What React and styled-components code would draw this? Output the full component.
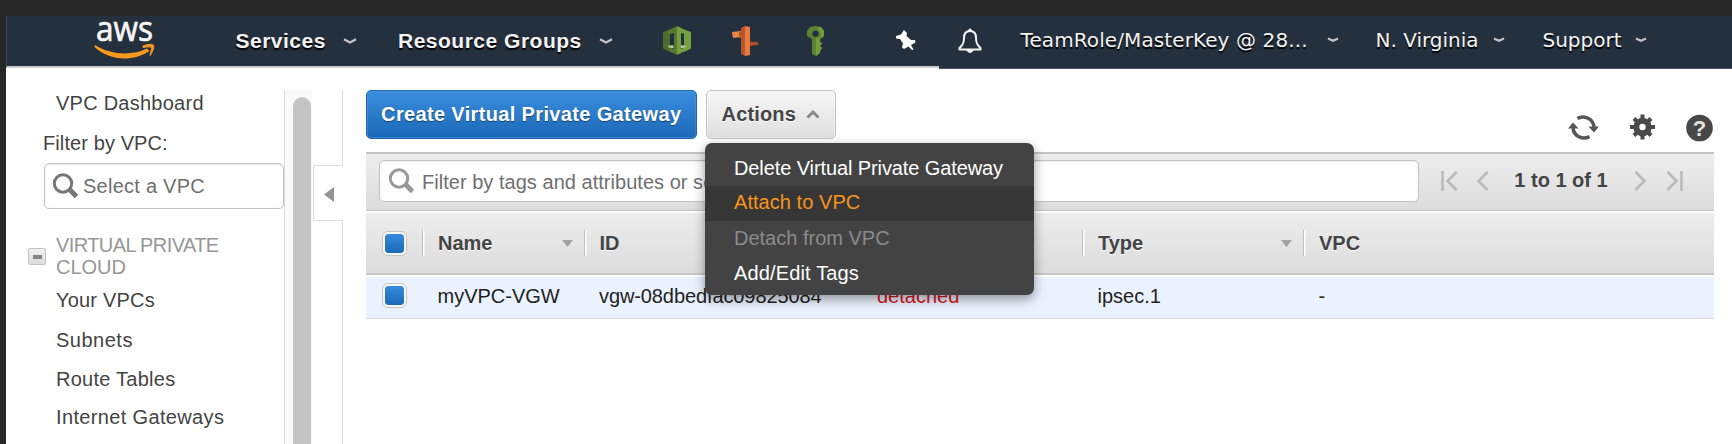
import React from 'react';
import styled, { createGlobalStyle } from 'styled-components';

const GlobalStyle = createGlobalStyle`
  *, *::before, *::after { box-sizing: border-box; }
  html, body { margin: 0; background: #272727; overflow: hidden; }
  body { font-family: "Liberation Sans", Arial, sans-serif; font-size: 20px; color: #444; }
  svg { display: block; flex: none; overflow: visible; }
`;

const Page = styled.div`
  height: 444px;
  padding: 16px 0 0 6px;
  background: #272727;
`;

const Window = styled.div`
  height: 428px;
  display: flex;
  flex-direction: column;
  background: #fff;
`;

/* ---------- top navigation ---------- */

const NavBar = styled.header`
  display: flex;
  height: 53px;
  flex: none;
  color: #f2f2f2;
  text-shadow: 0 2px 1px #000;
`;

const NavMain = styled.div`
  display: flex;
  align-items: center;
  width: 933px;
  height: 52px;
  padding-bottom: 1px;
  background: #24303d;
  border-left: 1px solid #414c5a;
  border-bottom: 2px solid #c9cbce;
`;

const NavAccount = styled.div`
  display: flex;
  align-items: center;
  flex: 1;
  padding-bottom: 4px;
  background: #24303d;
  border-bottom: 1px solid #4b5563;
  font-family: "DejaVu Sans", Verdana, sans-serif;
`;

const NavLabel = styled.span`
  flex: none;
  width: ${(p) => p.$width}px;
  margin-left: ${(p) => p.$gap}px;
  font-size: ${(p) => (p.$bold ? 21 : 20)}px;
  font-weight: ${(p) => (p.$bold ? 700 : 400)};
  letter-spacing: ${(p) => p.$track || 0}px;
  line-height: 28px;
  white-space: nowrap;
`;

const NavIcon = styled.span`
  flex: none;
  margin-left: ${(p) => p.$gap}px;
`;

/* ---------- body ---------- */

const Body = styled.div`
  display: flex;
  flex: 1;
  min-height: 0;
  padding-top: 21px;
`;

const Sidebar = styled.nav`
  width: 278px;
  flex: none;
  margin-top: -6px;
  padding-left: 38px;
`;

const SideItem = styled.div`
  height: ${(p) => p.$height || 39}px;
  line-height: ${(p) => p.$height || 39}px;
  padding-left: 12px;
  letter-spacing: ${(p) => p.$track || 0}px;
  white-space: nowrap;
`;

const SideLabel = styled(SideItem)`
  padding-left: 0;
  margin-left: -1px;
`;

const SearchBox = styled.div`
  display: flex;
  align-items: center;
  gap: ${(p) => p.$gap}px;
  width: ${(p) => p.$width}px;
  height: ${(p) => p.$height}px;
  padding-left: ${(p) => p.$inset}px;
  background: #fff;
  border: 1.5px solid #c2c2c2;
  border-radius: 5px;
  color: #6f6f6f;
  letter-spacing: ${(p) => p.$track}px;
  box-shadow: inset 0 1px 2px rgba(0, 0, 0, 0.08);
  white-space: nowrap;
`;

const BoxText = styled.span`
  padding-top: ${(p) => p.$drop || 0}px;
`;

const SideGroup = styled.div`
  display: flex;
  align-items: center;
  margin: 26px 0 3px -16px;
  color: #979797;
  line-height: 21.5px;
`;

const GroupName = styled.div`
  margin-left: 10px;
  white-space: nowrap;
`;

const GroupLine = styled.div`
  letter-spacing: ${(p) => p.$track}px;
`;

const Collapse = styled.span`
  display: flex;
  align-items: center;
  justify-content: center;
  width: 18px;
  height: 17px;
  background: linear-gradient(#f2f2f2, #dcdcdc);
  border: 1.5px solid #c3c3c3;
  border-radius: 2px;

  &::after {
    content: "";
    width: 9px;
    height: 4px;
    background: #858585;
  }
`;

const ScrollTrack = styled.div`
  width: 28px;
  flex: none;
  padding: 7px 2px 0 8px;
  background: #fafafa;
  border-left: 1px solid #dcdcdc;
`;

const ScrollThumb = styled.div`
  width: 18px;
  height: 100%;
  background: #c4c4c4;
  border-radius: 9px 9px 0 0;
`;

const Splitter = styled.div`
  display: flex;
  flex-direction: column;
  align-items: flex-end;
  width: 31px;
  flex: none;
`;

const SplitLine = styled.div`
  width: 1px;
  height: ${(p) => p.$height};
  flex: ${(p) => (p.$height ? 'none' : 1)};
  background: #dedede;
`;

const SplitHandle = styled.div`
  display: flex;
  align-items: center;
  justify-content: flex-end;
  width: 30px;
  height: 56px;
  padding: 2px 9px 0 0;
  border: 1px solid #dedede;
  border-right: 0;
  border-radius: 2px 0 0 2px;
`;

const Main = styled.main`
  width: 1348px;
  margin-left: 23px;
  flex: none;
`;

const Toolbar = styled.div`
  display: flex;
  height: 49px;
  margin-bottom: 13px;
`;

const Button = styled.button`
  display: flex;
  align-items: center;
  justify-content: center;
  gap: 10px;
  width: ${(p) => p.$width}px;
  height: 49px;
  padding: 0;
  font: 700 20px "Liberation Sans", Arial, sans-serif;
  letter-spacing: ${(p) => p.$track}px;
  white-space: nowrap;
  border-radius: 5px;
  color: ${(p) => (p.$primary ? '#fff' : '#444')};
  border: 1.5px solid ${(p) => (p.$primary ? '#1b67b3' : '#c1c1c1')};
  background: ${(p) => (p.$primary ? 'linear-gradient(#3a8ddd, #1c69b9)' : 'linear-gradient(#f6f6f6, #dfdfdf)')};
  box-shadow: inset 0 0 0 1px ${(p) => (p.$primary ? 'rgba(90,160,225,.4)' : 'rgba(255,255,255,.4)')};
  text-shadow: ${(p) => (p.$primary ? '0 1px 1px rgba(0,0,0,.45)' : '0 1px 0 #fff')};
`;

const MenuAnchor = styled.div`
  position: relative;
  margin-left: 9.5px;
`;

const Menu = styled.div`
  position: absolute;
  z-index: 2;
  top: 53px;
  left: -1px;
  width: 329px;
  height: 152px;
  padding-top: 8px;
  background: #434343;
  border-radius: 7px;
  box-shadow: 0 4px 12px rgba(0, 0, 0, 0.4);
`;

const tones = { normal: '#fff', active: '#f7941d', disabled: '#8b8b8b' };

const MenuItem = styled.div`
  height: 35px;
  line-height: ${(p) => (p.$tone === 'active' ? 33.5 : 35)}px;
  padding-left: 29px;
  letter-spacing: ${(p) => p.$track}px;
  white-space: nowrap;
  color: ${(p) => tones[p.$tone]};
  background: ${(p) => (p.$tone === 'active' ? '#363636' : 'transparent')};
`;

const Tools = styled.div`
  display: flex;
  align-items: flex-start;
  margin-left: auto;
  padding-top: 24px;
`;

const Tool = styled.span`
  margin-right: ${(p) => p.$gap}px;
`;

const FilterBar = styled.div`
  display: flex;
  align-items: center;
  height: 59px;
  padding: 0 0 2px 13px;
  background: linear-gradient(#ededed, #dcdcdc);
  border-top: 2px solid #c3c3c3;
  border-bottom: 1.5px solid #c3c3c3;
`;

const Pager = styled.div`
  display: flex;
  align-items: center;
  margin-left: 21.5px;
`;

const PageRange = styled.span`
  width: 95px;
  margin: 0 25px 0 25px;
  padding-bottom: 2px;
  font-weight: 700;
  text-align: center;
  white-space: nowrap;
`;

const Gap = styled.span`
  width: ${(p) => p.$width}px;
`;

const columns = '56px 161.5px 278px 220.5px 221px 1fr';

const HeaderRow = styled.div`
  display: grid;
  grid-template-columns: ${columns};
  align-items: center;
  height: 62px;
  margin-top: 2px;
  background: linear-gradient(#ededed, #dcdcdc);
  border-bottom: 2px solid #c6c6c6;
  font-weight: 700;
  text-shadow: 0 1px 0 #fff;
`;

const HeaderCell = styled.div`
  display: flex;
  align-items: center;
  justify-content: space-between;
  height: 26px;
  padding: 1px 11px 0 ${(p) => p.$inset || 15}px;
  border-left: 1.5px solid #bfbfbf;
  box-shadow: inset 1.5px 0 0 #fff;
`;

const DataRow = styled.div`
  display: grid;
  grid-template-columns: ${columns};
  align-items: center;
  height: 42px;
  margin-top: 1.5px;
  padding-bottom: 4px;
  background: #eaf2fe;
  border-bottom: 1.5px solid #d9dcdf;
  color: #222;
`;

const DataCell = styled.div`
  padding: 3px 0 0 ${(p) => p.$inset || 15.5}px;
  letter-spacing: ${(p) => p.$track || 0}px;
  color: ${(p) => (p.$alert ? '#d8151f' : '#222')};
`;

const CheckBox = styled.span`
  width: 25px;
  height: 25px;
  margin-left: 16px;
  padding: 2px;
  background: linear-gradient(#368add, #1b68b8) content-box, #f7f7f7;
  border: 1.5px solid #c4c4c4;
  border-radius: 6px;
  box-shadow: inset 0 0 0 2px #f7f7f7;
`;

/* ---------- drawings ---------- */

const AwsLogo = () => (
  <svg width="62" height="44" viewBox="0 0 62 44">
    <text x="2" y="22" fontFamily="'Open Sans', 'Noto Sans', sans-serif" fontSize="34" fontWeight="500" textLength="57" lengthAdjust="spacingAndGlyphs" fill="#f5f5f5" stroke="#f5f5f5" strokeWidth=".7" style={{ textShadow: 'none' }}>aws</text>
    <path d="M1 26 C17 36 38 37 53 29.500 L55.500 32 C38 43.500 15 41.500 0.500 28 Z" fill="#f7981f" />
    <path d="M49 27 C54 25 58 25 59.500 26 C60.500 29 58 34 56 36.500 C57 32 58 29 57 28 C55 27.500 52 28 49 28.500 Z" fill="#f7981f" stroke="#f7981f" strokeWidth="1" />
  </svg>
);

const NavCaret = ({ small }) => (
  <svg width={small ? 12 : 14} height="6" viewBox={small ? '1 0 12 6' : '0 0 14 6'}>
    <path d={small ? 'M2 1.500 L7 3.800 L12 1.500' : 'M1 1.300 L7 4.500 L13 1.300'} fill="none" stroke="#c4c4c4" strokeWidth="2.300" />
  </svg>
);

const CodeServiceIcon = () => (
  <svg width="28" height="29" viewBox="0 0 28 29">
    <path d="M0 6 L7 3.5 V26 L0 22.5 Z" fill="#4c6c2b" />
    <path d="M28 6 L21 3.5 V26 L28 22.5 Z" fill="#74a03d" />
    <path d="M8 3 L14 0 V29 L7 25.5 V21.5 L11 23 V7 L4 8.5 V5 Z" fill="#56792f" />
    <path d="M20 3 L14 0 V29 L21 25.5 V21.5 L18 23 V7 L24 8.5 V5 Z" fill="#74a03d" />
    <path d="M4 20 L10 19 L11 22 L7 22 Z M18 19 L24 20 L21 22 L18 22 Z" fill="#b1c59a" />
  </svg>
);

const RouteIcon = () => (
  <svg width="27" height="30" viewBox="0 0 27 30">
    <path d="M0 6 L9 5 V11 L1 12 Z" fill="#ef8643" />
    <path d="M9 2 L13 0 V30 L9 28 V12 L7 12 V6 L9 6 Z" fill="#b6572b" />
    <path d="M13 0 L18 1 V29 L13 30 Z" fill="#e9793c" />
    <path d="M18 15.500 L26 16 L26.500 19 L18 20 Z" fill="#a84f29" />
  </svg>
);

const KeyIcon = () => (
  <svg width="17" height="30" viewBox="0 0 17 30">
    <path fillRule="evenodd" d="M3 1 L9 0 L14 1 L17 5 V10 L15 12 L13 13 V16 L15 17 L13 20 L15 22 L13 25 V27 L9 30 L5 28 V13 L0 10 V5 Z M8.500 4.500 A3.200 3.200 0 1 0 8.510 4.500 Z" fill="#5b8232" />
    <path d="M9 12 H13 V16 L15 17 L13 20 L15 22 L13 25 V27 L9 30 Z M14 1 L17 5 V10 L13 12 Q15 6 10 2 Z" fill="#709c3a" />
  </svg>
);

const PinIcon = () => (
  <svg width="20" height="21" viewBox="0 0 20 21">
    <path d="M8 0 L11 3 L10.500 6 L15 10 L19 10 L19.500 12.500 L15 15 L17.500 19.500 L16 20 L12.500 16.500 L8 19 L6 17.500 L7 13.500 L4 9 L0 8.500 L0 6 L5 4.500 Z" fill="#fff" />
  </svg>
);

const BellIcon = () => (
  <svg width="24" height="25" viewBox="0 0 24 25">
    <path d="M12 3 C7.500 3 6 6 6 10 C6 15 5 17 1.500 20 V21.500 H22.500 V20 C19 17 18 15 18 10 C18 6 16.500 3 12 3 Z" fill="none" stroke="#f4f4f4" strokeWidth="2" strokeLinejoin="round" />
    <path d="M10.500 2.500 Q12 -1 13.500 2.500 Z M8.500 22 H15.500 Q12 27 8.500 22 Z" fill="#f4f4f4" stroke="#f4f4f4" />
  </svg>
);

const SearchIcon = ({ color }) => (
  <svg width="26" height="26" viewBox="0 0 26 26">
    <circle cx="11" cy="10.500" r="8.700" fill="none" stroke={color} strokeWidth="3" />
    <path d="M17.500 16.500 L24.500 23.500" stroke={color} strokeWidth="5" />
  </svg>
);

const RefreshIcon = () => (
  <svg width="31" height="27" viewBox="0 0 31 27">
    <path d="M9.500 4.500 A11 11 0 0 1 26 13 M21.500 22.500 A11 11 0 0 1 5 14" fill="none" stroke="#555" strokeWidth="3.500" />
    <path d="M20.500 12.500 H31 L26 18.500 Z M0 14.500 H10.500 L5 8.500 Z" fill="#555" />
  </svg>
);

const GearIcon = () => (
  <svg width="25" height="26" viewBox="0 0 25 26">
    <g stroke="#4a4a4a" strokeWidth="4">
      <path d="M12.500 0.500 V7 M12.500 19 V25.500 M0 13 H7 M18 13 H25 M4 4.500 L8 8.500 M17 17.500 L21 21.500 M21 4.500 L17 8.500 M8 17.500 L4 21.500" />
    </g>
    <circle cx="12.500" cy="13" r="6.200" fill="none" stroke="#4a4a4a" strokeWidth="6" />
  </svg>
);

const HelpIcon = () => (
  <svg width="27" height="28" viewBox="0 0 27 28">
    <circle cx="13.500" cy="14" r="13.300" fill="#484848" />
    <text x="13.500" y="21.500" textAnchor="middle" fontFamily="'Liberation Sans', Arial, sans-serif" fontSize="22" fontWeight="700" fill="#e4e4e4">?</text>
  </svg>
);

const PageArrow = ({ forward, edge }) => (
  <svg width={edge ? 17 : 12} height="20" viewBox={edge ? '0 0 17 20' : '5 0 12 20'} transform={forward ? 'scale(-1 1)' : undefined}>
    {edge && <path d="M1.500 0 V20" stroke="#b9b9b9" strokeWidth="2.500" />}
    <path d="M15.500 1 L6.500 10 L15.500 19" fill="none" stroke="#b9b9b9" strokeWidth="2.500" />
  </svg>
);

const SortArrow = () => (
  <svg width="11" height="7" viewBox="0 0 11 7">
    <path d="M0 0 H11 L5.500 7 Z" fill="#a2a2a2" />
  </svg>
);

const UpCaret = () => (
  <svg width="14" height="10" viewBox="0 0 14 10">
    <path d="M1.500 7.500 L7 2 L12.500 7.500" fill="none" stroke="#8a8a8a" strokeWidth="3" />
  </svg>
);

const LeftArrow = () => (
  <svg width="10" height="15" viewBox="0 0 10 15">
    <path d="M10 0 V15 L0 7.500 Z" fill="#939393" />
  </svg>
);

const menuItems = [
  { label: 'Delete Virtual Private Gateway', tone: 'normal', track: -0.1 },
  { label: 'Attach to VPC', tone: 'active', track: 0.05 },
  { label: 'Detach from VPC', tone: 'disabled', track: 0 },
  { label: 'Add/Edit Tags', tone: 'normal', track: 0.15 },
];

const sideLinks = [
  { label: 'Your VPCs', track: 0.2 },
  { label: 'Subnets', track: 0.5, height: 40 },
  { label: 'Route Tables', track: 0.25, height: 39 },
  { label: 'Internet Gateways', track: 0.35, height: 37 },
];

export default function App() {
  return (
    <Page>
      <GlobalStyle />
      <Window>
        <NavBar>
          <NavMain>
            <NavIcon $gap={87}><AwsLogo /></NavIcon>
            <NavLabel $bold $gap={79.500} $width={92} $track={0.5}>Services</NavLabel>
            <NavIcon $gap={15}><NavCaret /></NavIcon>
            <NavLabel $bold $gap={41.500} $width={185} $track={0.5}>Resource Groups</NavLabel>
            <NavIcon $gap={15.500}><NavCaret /></NavIcon>
            <NavIcon $gap={50.500}><CodeServiceIcon /></NavIcon>
            <NavIcon $gap={41}><RouteIcon /></NavIcon>
            <NavIcon $gap={47.500}><KeyIcon /></NavIcon>
            <NavIcon $gap={72}><PinIcon /></NavIcon>
          </NavMain>
          <NavAccount>
            <NavIcon $gap={19}><BellIcon /></NavIcon>
            <NavLabel $gap={38.500} $width={288} $track={0.1}>TeamRole/MasterKey @ 28...</NavLabel>
            <NavIcon $gap={18}><NavCaret small /></NavIcon>
            <NavLabel $gap={37} $width={104}>N. Virginia</NavLabel>
            <NavIcon $gap={13}><NavCaret small /></NavIcon>
            <NavLabel $gap={38} $width={80}>Support</NavLabel>
            <NavIcon $gap={12}><NavCaret small /></NavIcon>
          </NavAccount>
        </NavBar>
        <Body>
          <Sidebar>
            <SideItem $track={0.25}>VPC Dashboard</SideItem>
            <SideLabel $height={40} $track={0.1}>Filter by VPC:</SideLabel>
            <SearchBox $width={240} $height={46} $inset={7} $gap={5} $track={0.25}>
              <SearchIcon color="#777" />
              <BoxText $drop={1}>Select a VPC</BoxText>
            </SearchBox>
            <SideGroup>
              <Collapse />
              <GroupName>
                <GroupLine $track={-0.6}>VIRTUAL PRIVATE</GroupLine>
                <GroupLine $track={0}>CLOUD</GroupLine>
              </GroupName>
            </SideGroup>
            {sideLinks.map((l) => (
              <SideItem key={l.label} $track={l.track} $height={l.height}>{l.label}</SideItem>
            ))}
          </Sidebar>
          <ScrollTrack><ScrollThumb /></ScrollTrack>
          <Splitter>
            <SplitLine $height="75px" />
            <SplitHandle><LeftArrow /></SplitHandle>
            <SplitLine />
          </Splitter>
          <Main>
            <Toolbar>
              <Button $primary $width={330.500} $track={0.35}>Create Virtual Private Gateway</Button>
              <MenuAnchor>
                <Button $width={129.500} $track={0.15}>Actions <UpCaret /></Button>
                <Menu>
                  {menuItems.map((m) => (
                    <MenuItem key={m.label} $tone={m.tone} $track={m.track}>{m.label}</MenuItem>
                  ))}
                </Menu>
              </MenuAnchor>
              <Tools>
                <Tool $gap={31}><RefreshIcon /></Tool>
                <Tool $gap={31}><GearIcon /></Tool>
                <Tool $gap={1}><HelpIcon /></Tool>
              </Tools>
            </Toolbar>
            <FilterBar>
              <SearchBox $width={1040} $height={42} $inset={8} $gap={8} $track={0.03}>
                <SearchIcon color="#999" />
                <BoxText $drop={3}>Filter by tags and attributes or search by keyword</BoxText>
              </SearchBox>
              <Pager>
                <PageArrow edge />
                <Gap $width={19} />
                <PageArrow />
                <PageRange>1 to 1 of 1</PageRange>
                <PageArrow forward />
                <Gap $width={20} />
                <PageArrow edge forward />
              </Pager>
            </FilterBar>
            <HeaderRow>
              <CheckBox />
              <HeaderCell>Name <SortArrow /></HeaderCell>
              <HeaderCell>ID</HeaderCell>
              <HeaderCell />
              <HeaderCell>Type <SortArrow /></HeaderCell>
              <HeaderCell>VPC</HeaderCell>
            </HeaderRow>
            <DataRow>
              <CheckBox />
              <DataCell>myVPC-VGW</DataCell>
              <DataCell $track={-0.1}>vgw-08dbedfac09825084</DataCell>
              <DataCell $alert>detached</DataCell>
              <DataCell>ipsec.1</DataCell>
              <DataCell>-</DataCell>
            </DataRow>
          </Main>
        </Body>
      </Window>
    </Page>
  );
}
